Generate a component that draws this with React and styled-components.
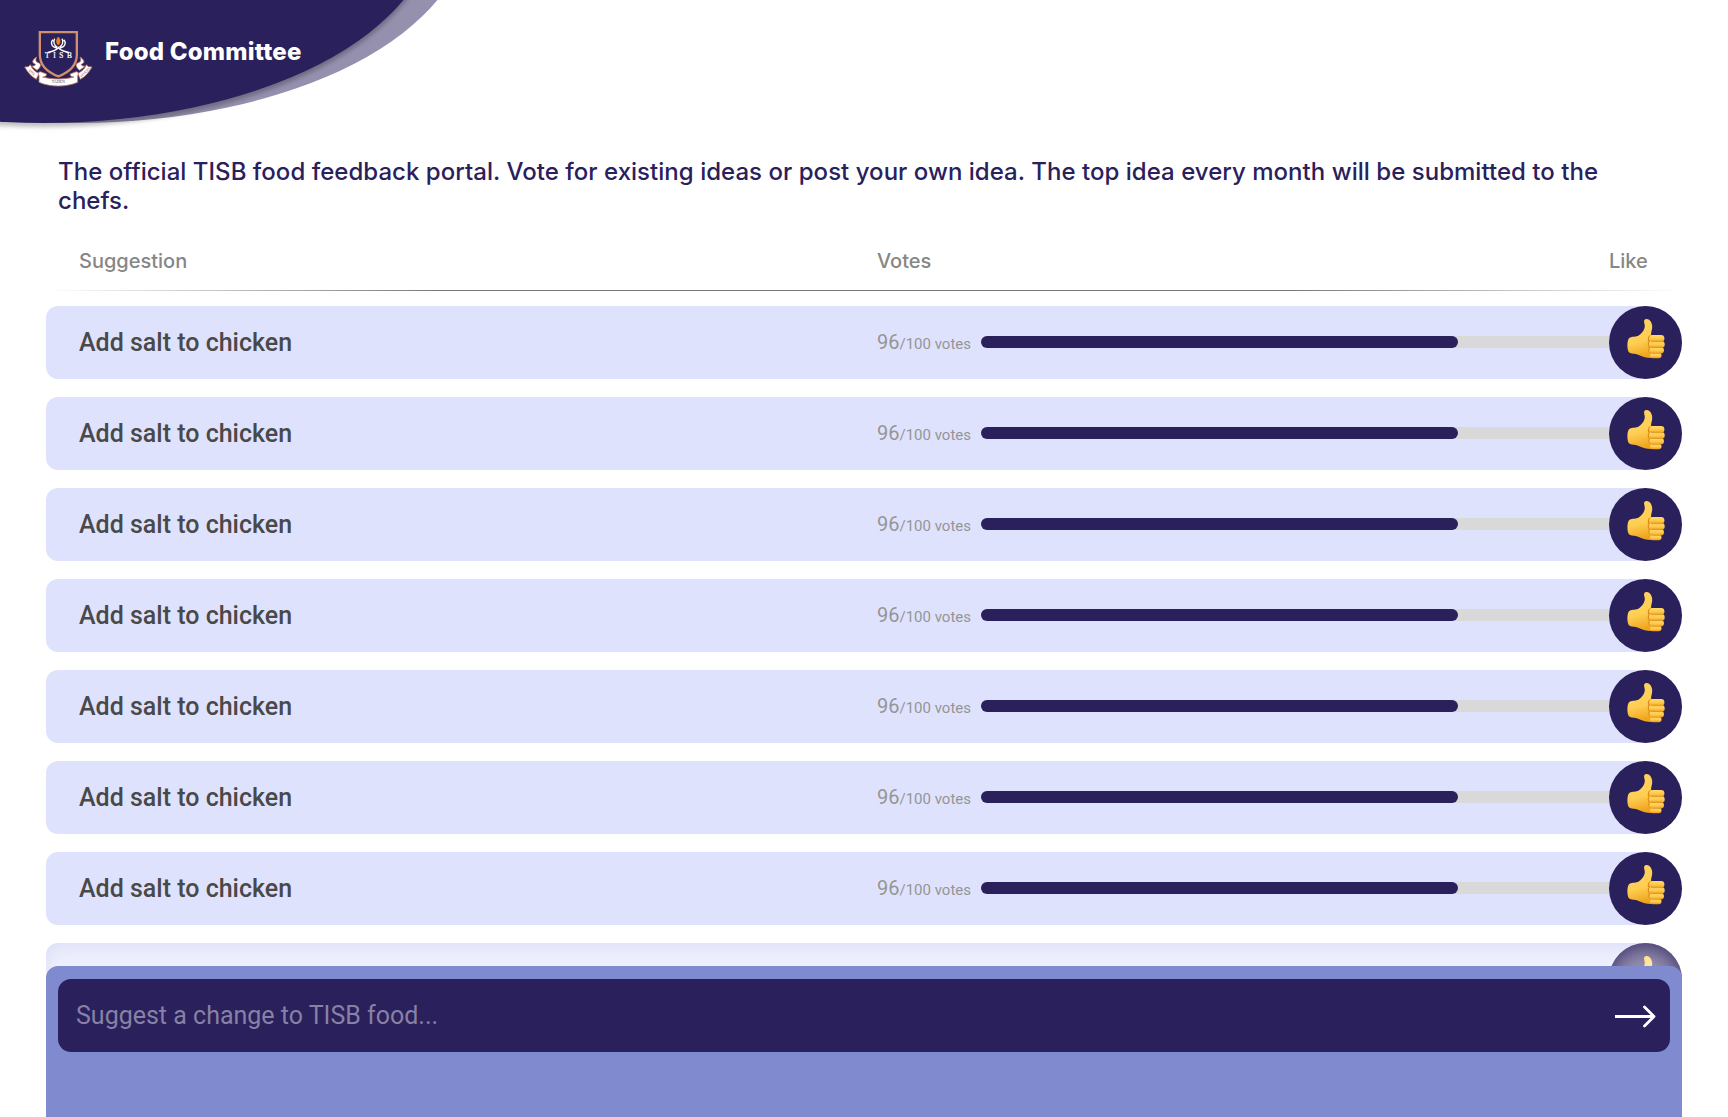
import React from "react";
import styled, { createGlobalStyle, css } from "styled-components";

const NAVY = "#29205c";

const GlobalStyle = createGlobalStyle`
  * { box-sizing: border-box; }
  body {
    margin: 0;
    background: #fff;
    font-family: Inter, "Liberation Sans", sans-serif;
  }
`;

const Page = styled.div`
  position: relative;
  height: 1117px;
  overflow: hidden;
  display: flex;
  flex-direction: column;
  background: #fff;
`;

const Header = styled.header`
  position: relative;
  height: 157px;
  flex: none;
  overflow: hidden;
  padding: 20px 0 0 15px;
  display: flex;
  align-items: flex-start;
`;

const Swoosh = styled.div`
  position: absolute;
  left: ${(p) => p.$left}px;
  top: -282.7px;
  width: 783px;
  height: 405.4px;
  border-radius: 50%;
  background: ${(p) => (p.$front ? NAVY : "#9590ae")};
  ${(p) => p.$front && css`box-shadow: 0 4px 4px rgba(0, 0, 0, 0.25);`}
`;

const Crest = styled.svg`
  position: relative;
  width: 90px;
  height: 75px;
  flex: none;
`;

const Brand = styled.h1`
  position: relative;
  margin: 17px 0 0;
  font-size: 24px;
  line-height: 29px;
  font-weight: 800;
  letter-spacing: 0.2px;
  color: #fff;
  white-space: nowrap;
`;

const Intro = styled.p`
  margin: 0 58px;
  height: 58px;
  font-size: 24px;
  line-height: 29px;
  font-weight: 500;
  letter-spacing: 0.03px;
  color: ${NAVY};
`;

const Board = styled.main`
  margin: 34px 46px 0;
  display: flex;
  flex-direction: column;
`;

const columns = css`
  display: grid;
  grid-template-columns: 798px 732px 73px;
  padding-left: 33px;
`;

const TableHead = styled.div`
  ${columns}
  height: 41px;
  font-size: 20px;
  line-height: 24px;
  font-weight: 500;
  color: #868686;
`;

const Divider = styled.div`
  height: 1px;
  margin-bottom: 15px;
  background: linear-gradient(90deg, rgba(120, 120, 120, 0), #787878 24%, #787878 76%, rgba(120, 120, 120, 0));
`;

const List = styled.div`
  display: flex;
  flex-direction: column;
  gap: 18px;
`;

const Row = styled.div`
  ${columns}
  height: 73px;
  align-items: center;
  border-radius: 12px 36.5px 36.5px 12px;
  background: #dfe2fd;
  ${(p) =>
    p.$faded &&
    css`
      background: #eff0fe;
      box-shadow: inset 0 4px 20px #dadef6;
    `}
`;

const Title = styled.div`
  font: 500 25px/29px Roboto, sans-serif;
  color: #494949;
`;

const Votes = styled.div`
  display: flex;
  align-items: center;
`;

const Count = styled.div`
  width: 104px;
  font: 400 20px/24px Roboto, sans-serif;
  color: #959595;
  white-space: nowrap;
  small { font-size: 15px; }
`;

const Track = styled.div`
  flex: 1;
  height: 12px;
  margin: 0 -20px 1px 0;
  border-radius: 6px 0 0 6px;
  background: #d9d9d9;
`;

const Fill = styled.div`
  width: 477px;
  height: 12px;
  border-radius: 6px;
  background: ${NAVY};
`;

const LikeButton = styled.button`
  position: relative;
  width: 73px;
  height: 73px;
  padding: 0;
  border: 0;
  border-radius: 50%;
  background: ${NAVY};
  display: flex;
  justify-content: center;
  ${(p) =>
    p.$faded &&
    css`
      background: #948fae;
      box-shadow: inset 0 4px 20px #3d346c;
    `}
  svg { margin-top: 12px; }
`;

const Composer = styled.form`
  position: absolute;
  left: 46px;
  right: 46px;
  bottom: 0;
  height: 151px;
  padding: 13px 12px 0;
  border-radius: 12px 12px 0 0;
  background: #808ace;
`;

const Field = styled.div`
  height: 73px;
  padding: 0 13px 0 18px;
  border-radius: 13px;
  background: ${NAVY};
  display: flex;
  align-items: center;
  justify-content: space-between;
`;

const Placeholder = styled.span`
  font: 400 25px/29px Roboto, sans-serif;
  color: #8781a5;
`;

function ThumbIcon({ faded }) {
  const palm = faded ? "palm-faded" : "palm";
  return (
    <svg width="40" height="44" viewBox="0 0 40 44" fill="none">
      <defs>
        <linearGradient id={palm} x1="0" y1="0" x2="0.25" y2="1">
          <stop offset="0" stopColor={faded ? "#ffe08e" : "#ffd25b"} />
          <stop offset="0.62" stopColor={faded ? "#ffe7aa" : "#ffcf55"} />
          <stop offset="1" stopColor={faded ? "#f7d28e" : "#efa51e"} />
        </linearGradient>
        <linearGradient id="finger" x1="0" y1="0" x2="0" y2="1">
          <stop offset="0" stopColor="#ffda6b" />
          <stop offset="0.6" stopColor="#ffc747" />
          <stop offset="1" stopColor="#e7981b" />
        </linearGradient>
      </defs>
      <path
        d="M2.8 20.5C5 18.4 9 19.3 11.7 18.1C15.4 16.3 18.7 11.6 18.8 8.2C18.9 6.4 17.8 4.2 18.1 2.7C18.5.8 21.2.4 23.1 1.7C25.4 3.3 26.4 6.8 26.2 9.4C26.1 11.9 24.7 14.8 25.1 17.1L35.5 18V31.5L31 39.5C24 40.6 17.6 39.5 13.2 37.3C10 35.5 6.3 36.4 3.1 34.6C.8 31.6 1 23 2.8 20.5Z"
        fill={`url(#${palm})`}
      />
      <path d="M24.9 17.5C22.1 19.2 21.7 22 23.6 23.5C21.9 25.1 22.1 28 24 29.3C22.4 31 22.7 33.7 24.7 34.7" stroke="#d98b18" strokeWidth="1.5" strokeLinecap="round" />
      <rect x="23.2" y="16.9" width="15.2" height="6.9" rx="3.4" fill="url(#finger)" />
      <rect x="22.9" y="23.1" width="15.8" height="6.6" rx="3.3" fill="url(#finger)" />
      <rect x="23.4" y="29.1" width="14.5" height="6.4" rx="3.2" fill="url(#finger)" />
      <rect x="24.2" y="34.8" width="11.3" height="5.4" rx="2.7" fill="url(#finger)" />
      <path d="M25.5 23.6H36.5M25.5 29.5H36.5M26 35.3H35" stroke="#d58a1c" strokeWidth=".8" strokeLinecap="round" />
    </svg>
  );
}

function RibbonEnd() {
  return (
    <>
      <path d="M29 141C38 157 49 170 64 178L72 160C61 156 51 147 46 134L40 140Z" />
      <path d="M65 111C52 119 50 128 58 131C64 133 62 137 50 139L66 151C78 142 80 131 70 128C62 126 61 120 65 111Z" />
    </>
  );
}

function SchoolCrest() {
  return (
    <Crest viewBox="0 0 270 225">
      <g fill="#fff" stroke="#bd735b" strokeWidth="2.5" strokeLinejoin="round">
        <RibbonEnd />
        <g transform="translate(260 0) scale(-1 1)">
          <RibbonEnd />
        </g>
        <path d="M72 167C67 160 72 153 79 156L95 162C94 168 89 172 83 171C112 179 148 179 177 171C171 172 166 168 165 162L181 156C188 153 193 160 188 167V187C153 202 107 202 72 187Z" />
      </g>
      <path d="M74.5 36.5H185.5V104C185.5 135 164 156 130 169C96 156 74.5 135 74.5 104Z" fill={NAVY} stroke="#cf906d" strokeWidth="7" />
      <path d="M114 59C106 66 108 81 125 84M146 59C154 66 152 81 135 84M119 56C114 65 117 76 127 82M141 56C146 65 143 76 133 82" fill="none" stroke="#fff" strokeWidth="4" />
      <path d="M130 79C137 89 146 92 162 95V100C144 96 135 91 130 86C125 91 116 96 98 100V95C114 92 123 89 130 79Z" fill="#fff" />
      <path d="M130 51C136 57 138 69 130 75C122 69 124 57 130 51Z" fill="#f0811a" stroke="#f0811a" strokeWidth="2" />
      <g fontFamily="Liberation Serif, serif">
        <text x="90" y="114" fontSize="22" fill="#fff" stroke="#fff" strokeWidth=".7" textLength="81">TISB</text>
        <g fontSize="10" fill="#4d3d66" textAnchor="middle">
          <text x="130" y="190" fontSize="12">TADEN</text>
          <text transform="translate(48 160) rotate(44)">VITA</text>
          <text transform="translate(212 160) rotate(-44)">STUDIO</text>
        </g>
      </g>
    </Crest>
  );
}

const suggestions = Array.from({ length: 8 }, (_, id) => ({
  id,
  title: "Add salt to chicken",
  votes: 96,
}));

export default function App() {
  return (
    <>
      <GlobalStyle />
      <Page>
        <Header>
          <Swoosh $left={-314} />
          <Swoosh $left={-348.5} $front />
          <SchoolCrest />
          <Brand>Food Committee</Brand>
        </Header>
        <Intro>
          The official TISB food feedback portal. Vote for existing ideas or post your own idea. The top idea every
          month will be submitted to the chefs.
        </Intro>
        <Board>
          <TableHead>
            <span>Suggestion</span>
            <span>Votes</span>
            <span>Like</span>
          </TableHead>
          <Divider />
          <List>
            {suggestions.map(({ id, title, votes }) => {
              const faded = id === suggestions.length - 1;
              return (
                <Row key={id} $faded={faded}>
                  <Title>{title}</Title>
                  <Votes>
                    <Count>
                      {votes}
                      <small>/100 votes</small>
                    </Count>
                    <Track>
                      <Fill />
                    </Track>
                  </Votes>
                  <LikeButton $faded={faded} aria-label="Like">
                    <ThumbIcon faded={faded} />
                  </LikeButton>
                </Row>
              );
            })}
          </List>
        </Board>
        <Composer>
          <Field>
            <Placeholder>Suggest a change to TISB food...</Placeholder>
            <svg width="43" height="24" viewBox="0 0 43 24" fill="none" stroke="#fff" strokeWidth="2.8">
              <path d="M1 12.5H40" />
              <path d="M30.5 3L40 12.5L30.5 22" strokeLinecap="round" strokeLinejoin="round" />
            </svg>
          </Field>
        </Composer>
      </Page>
    </>
  );
}
